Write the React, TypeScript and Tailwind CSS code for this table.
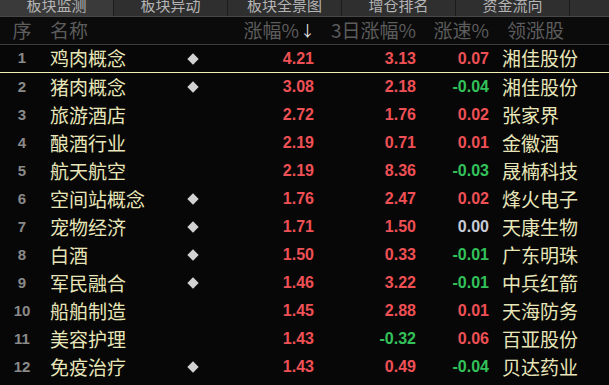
import React from 'react'

// 板块监测列表：表头 + 12 行板块行情
interface Row {
  name: string
  star?: boolean
  chg: string
  chg3: string
  speed: string
  lead: string
}

const rows: Row[] = [
  { name: '鸡肉概念', star: true, chg: '4.21', chg3: '3.13', speed: '0.07', lead: '湘佳股份' },
  { name: '猪肉概念', star: true, chg: '3.08', chg3: '2.18', speed: '-0.04', lead: '湘佳股份' },
  { name: '旅游酒店', chg: '2.72', chg3: '1.76', speed: '0.02', lead: '张家界' },
  { name: '酿酒行业', chg: '2.19', chg3: '0.71', speed: '0.01', lead: '金徽酒' },
  { name: '航天航空', chg: '2.19', chg3: '8.36', speed: '-0.03', lead: '晟楠科技' },
  { name: '空间站概念', star: true, chg: '1.76', chg3: '2.47', speed: '0.02', lead: '烽火电子' },
  { name: '宠物经济', star: true, chg: '1.71', chg3: '1.50', speed: '0.00', lead: '天康生物' },
  { name: '白酒', star: true, chg: '1.50', chg3: '0.33', speed: '-0.01', lead: '广东明珠' },
  { name: '军民融合', star: true, chg: '1.46', chg3: '3.22', speed: '-0.01', lead: '中兵红箭' },
  { name: '船舶制造', chg: '1.45', chg3: '2.88', speed: '0.01', lead: '天海防务' },
  { name: '美容护理', chg: '1.43', chg3: '-0.32', speed: '0.06', lead: '百亚股份' },
  { name: '免疫治疗', star: true, chg: '1.43', chg3: '0.49', speed: '-0.04', lead: '贝达药业' },
]

const tabs = ['板块监测', '板块异动', '板块全景图', '增仓排名', '资金流向', 'DDE']

const CJK = "font-['Noto_Sans_CJK_SC',sans-serif]"
const NUM = "font-['Liberation_Sans',Arial,sans-serif] font-bold"

function tone(v: string) {
  if (v.startsWith('-')) return 'text-[#33c25a]'
  if (Number(v) === 0) return 'text-[#c8ccd6]'
  return 'text-[#ee5055]'
}

export default function App() {
  return (
    <div className="w-[609px] h-[385px] overflow-hidden bg-[#070707] flex flex-col">
      <div className="h-[17px] shrink-0 flex bg-[#2f2f2f] border-b border-[#474747] overflow-hidden">
        {tabs.map((t, i) => (
          <div
            key={t}
            className={`w-[114px] shrink-0 flex justify-center border-r border-[#1c1c1c] ${i === 0 ? 'bg-[#3a3a3a]' : ''}`}
          >
            <span className={`${CJK} text-[15px] leading-[15px] -mt-[3px] text-[#b4b4b4]`}>{t}</span>
          </div>
        ))}
      </div>

      <div className={`h-[28px] shrink-0 flex items-center border-b border-[#3c3c3c] bg-[#0b0b0b] ${CJK} text-[19px] text-[#5c5c5c]`}>
        <div className="w-[44px] text-center">序</div>
        <div className="w-[136px] pl-[6px]">名称</div>
        <div className="w-[26px]" />
        <div className="w-[109px] text-right flex justify-end items-center">
          涨幅%<span className="text-[#e6e6e6] text-[15px] ml-[1px]">↓</span>
        </div>
        <div className="w-[101px] text-right">3日涨幅%</div>
        <div className="w-[73px] text-right">涨速%</div>
        <div className="pl-[18px]">领涨股</div>
      </div>

      {rows.map((r, i) => (
        <div
          key={r.name}
          className={`h-[28px] shrink-0 flex items-center ${i === 0 ? 'border-b border-[#f2f0b4]' : ''}`}
        >
          <div className={`w-[44px] text-center text-[15px] text-[#8a8a8a] ${NUM}`}>{i + 1}</div>
          <div className={`w-[136px] pl-[6px] ${CJK} text-[19px] text-[#e8e6b8]`}>{r.name}</div>
          <div className="w-[26px] flex justify-center">
            {r.star && <div className="w-[8px] h-[8px] rotate-45 bg-[#d2d2d2]" />}
          </div>
          <div className={`w-[108px] text-right text-[16px] ${NUM} ${tone(r.chg)}`}>{r.chg}</div>
          <div className={`w-[102px] text-right text-[16px] ${NUM} ${tone(r.chg3)}`}>{r.chg3}</div>
          <div className={`w-[73px] text-right text-[16px] ${NUM} ${tone(r.speed)}`}>{r.speed}</div>
          <div className={`pl-[13px] ${CJK} text-[19px] text-[#e8e6b8]`}>{r.lead}</div>
        </div>
      ))}
    </div>
  )
}
